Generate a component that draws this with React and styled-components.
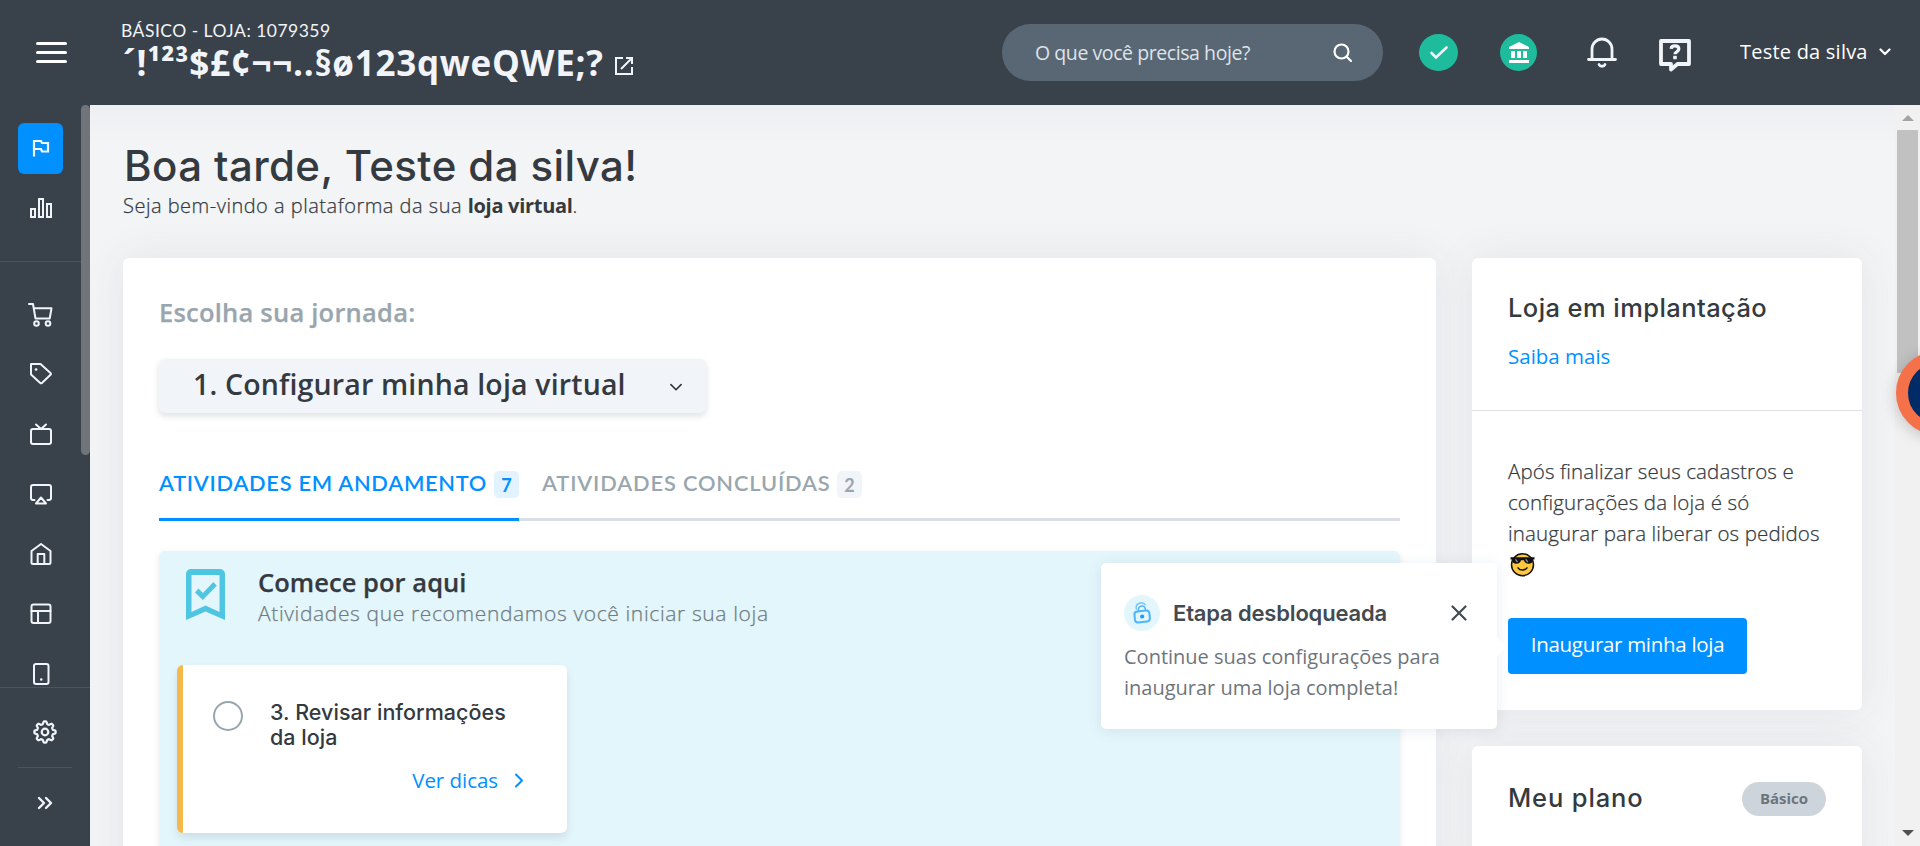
import React from 'react';
import styled, { createGlobalStyle, css } from 'styled-components';

const GlobalStyle = createGlobalStyle`
  * { box-sizing: border-box; }
  body { margin: 0; overflow: hidden; }
  h1, h2, h3, p { margin: 0; }
  button { border: 0; padding: 0; background: none; color: inherit; font: inherit; letter-spacing: inherit; }
`;

const body = '"Open Sans", "Noto Sans", sans-serif';
const heading = 'Inter, "Noto Sans", sans-serif';
const caps = 'Lato, "Open Sans", sans-serif';
const ink = '#343a40';
const blue = '#0090ff';
const dark = '#39414b';

/* ---------- shell ---------- */
const Page = styled.div`
  width: 1920px; height: 846px; overflow: hidden; position: relative;
  display: flex; flex-direction: column;
  font-family: ${body}; color: ${ink}; background: #f3f4f6;
`;
const Body = styled.div` flex: 1; display: flex; min-height: 0; `;

/* ---------- header ---------- */
const Header = styled.header`
  height: 105px; flex: none; display: flex; align-items: center;
  padding-right: 29px; background: ${dark}; color: #f1f4f8;
`;
const MenuButton = styled.button`
  width: 31px; margin: 0 54px 0 36px;
  display: flex; flex-direction: column; gap: 6px;
  span { height: 3px; border-radius: 2px; background: #fff; }
`;
const Brand = styled.div` align-self: flex-start; padding-top: 20px; `;
const StoreMeta = styled.p`
  font: 400 17.5px/22px ${caps}; letter-spacing: .48px; white-space: nowrap;
`;
const StoreName = styled.div`
  display: flex; align-items: center; gap: 10px; margin-top: 2px;
  font-size: 35px; line-height: 38px; font-weight: 700; letter-spacing: .75px; white-space: nowrap;
  padding-left: 2px;
  svg { margin-top: 6px; }
`;
const HeaderTools = styled.div` margin-left: auto; display: flex; align-items: center; `;
const Search = styled.div`
  width: 381px; height: 57px; border-radius: 29px; background: #596775; color: #dfe3e8;
  display: flex; align-items: center; justify-content: space-between;
  padding: 0 30px 0 33px; margin-right: 36px;
  font-size: 19.5px; letter-spacing: -.43px;
  svg { color: #fff; }
`;
const StatusDot = styled.span`
  width: ${p => p.$size}px; height: 37px; border-radius: 50%; background: #1ebc9c;
  display: flex; align-items: center; justify-content: center; margin-right: ${p => p.$gap}px;
`;
const ToolIcon = styled.span` display: flex; margin-right: ${p => p.$gap}px; margin-top: ${p => p.$drop || 0}px; `;
const User = styled.div`
  display: flex; align-items: center; justify-content: space-between; width: 151px;
  font-size: 20px; line-height: 28px; padding-bottom: 1px; letter-spacing: .22px; color: #fff; white-space: nowrap;
`;

/* ---------- sidebar ---------- */
const Sidebar = styled.aside`
  width: 90px; flex: none; background: ${dark}; color: #f1f4f8;
  display: flex; flex-direction: column;
`;
const SideScroll = styled.div` height: 582px; display: flex; overflow: hidden; `;
const SideNav = styled.nav` width: 81px; flex: none; padding-top: 13px; `;
const SideThumb = styled.div` width: 9px; height: 350px; border-radius: 5px; background: #717479; `;
const SideItem = styled.div`
  height: 60px; display: flex; align-items: center; justify-content: center;
`;
const ActiveTile = styled.span`
  width: 45px; height: 51px; border-radius: 6px; background: ${blue};
  display: flex; align-items: center; justify-content: center;
`;
const SideRule = styled.div` height: 1px; background: #475561; margin: 23px 0 22px; `;
const SideFooter = styled.div`
  flex: 1; border-top: 1px solid #475561; display: flex; flex-direction: column; align-items: center;
`;
const FooterItem = styled.div`
  height: ${p => p.$h}px; padding-top: ${p => p.$top || 0}px; display: flex; align-items: center;
`;
const FooterRule = styled.div` width: 54px; height: 1px; background: #475561; `;

/* ---------- content ---------- */
const lightText = css` font-weight: 300; -webkit-text-stroke: .25px currentColor; `;
const Content = styled.main`
  flex: 1; padding: 36px 33px 0; min-width: 0;
  background: linear-gradient(#eeeff2, #f3f4f6 40px);
`;
const Greeting = styled.h1`
  font: 500 42px/49px ${heading}; letter-spacing: .4px; padding-left: 1px;
`;
const Welcome = styled.p`
  ${lightText} padding-top: 1px; font-size: 20px; line-height: 30px; letter-spacing: .5px;
  strong { font-weight: 700; letter-spacing: -.3px; -webkit-text-stroke: 0; }
`;
const Columns = styled.div` display: flex; align-items: flex-start; gap: 36px; margin-top: 37px; `;
const card = css` background: #fff; border-radius: 6px; box-shadow: 0 0 42px rgba(60, 65, 80, .085); `;
const JourneyCard = styled.section` ${card} width: 1313px; height: 700px; padding: 37px 36px 0; `;
const JourneyTitle = styled.h2`
  font-size: 25.5px; line-height: 34px; font-weight: 600; color: #99a6ae; letter-spacing: .22px;
  -webkit-text-stroke: .25px currentColor;
`;
const JourneySelect = styled.button`
  width: 547px; height: 54px; margin-top: 30px; padding: 0 23px 4px 34px;
  display: flex; align-items: center; justify-content: space-between;
  background: #f1f4f8; border-radius: 6px; box-shadow: 0 3px 6px rgba(50, 60, 75, .16);
  font-size: 28.5px; font-weight: 600; letter-spacing: .16px; color: ${ink};
  svg { margin-top: 7px; }
`;
const Tabs = styled.div`
  display: flex; gap: 23px; height: 56px; margin-top: 52px;
  box-shadow: inset 0 -3px #dbdfe5;
`;
const Tab = styled.div`
  display: flex; justify-content: space-between; width: ${p => p.$w}px;
  font: 600 21.8px/36px ${caps}; letter-spacing: ${p => p.$ls}px;
  white-space: nowrap;
  color: ${p => (p.$active ? blue : '#99a6ae')};
  border-bottom: 3px solid ${p => (p.$active ? blue : 'transparent')};
`;
const Count = styled.span`
  width: 25px; height: 27px; margin-top: 6px; border-radius: 5px; text-align: center;
  font-size: 18px; line-height: 28px; font-weight: 700; letter-spacing: 0;
  background: ${p => (p.$active ? '#e2f2ff' : '#f1f4f8')};
`;
const StartPanel = styled.div`
  margin-top: 30px; height: 400px; border-radius: 6px; background: #e3f6fb; padding: 16px 0 0 18px;
  box-shadow: 0 2px 6px rgba(50, 60, 75, .1);
`;
const PanelHead = styled.div` display: flex; padding-left: 9px; height: 61px; svg { margin-top: 2px; } `;
const PanelText = styled.div` margin-left: 33px; `;
const PanelTitle = styled.h3` font-size: 25.5px; line-height: 30px; font-weight: 600; letter-spacing: .05px; -webkit-text-stroke: .25px currentColor; `;
const PanelSub = styled.p` ${lightText} font-size: 21px; line-height: 33px; letter-spacing: .63px; color: #707b84; `;
const TaskCard = styled.article`
  width: 390px; height: 168px; margin-top: 37px; padding: 36px 43px 0 30px;
  border-left: 6px solid #f7b84b; border-radius: 6px; background: #fff;
  box-shadow: 0 5px 9px rgba(50, 80, 95, .13);
  display: flex; gap: 27px;
`;
const TaskCheck = styled.span` width: 30px; height: 30px; flex: none; border: 2px solid #98a6ad; border-radius: 50%; `;
const TaskBody = styled.div` flex: 1; margin-top: -1px; `;
const TaskTitle = styled.h3` font: 500 21.5px/25px ${heading}; letter-spacing: .04px; white-space: nowrap; `;
const TaskLink = styled.div`
  display: flex; justify-content: flex-end; align-items: center; gap: 16px; margin-top: 16px;
  font-size: 20.5px; line-height: 28px; letter-spacing: -.04px; color: ${blue};
`;

/* ---------- right column ---------- */
const Aside = styled.div` width: 390px; display: flex; flex-direction: column; gap: 36px; `;
const InfoCard = styled.section` ${card} `;
const InfoHead = styled.div` height: 153px; padding: 33px 36px 0; border-bottom: 1px solid #dcdfe3; `;
const InfoTitle = styled.h2` font: 500 25.5px/34px ${heading}; letter-spacing: ${p => p.$ls}px; `;
const InfoLink = styled.a` display: block; margin-top: 16px; font-size: 20.5px; line-height: 31px; color: ${blue}; `;
const InfoBody = styled.div` padding: 45px 36px 36px; `;
const InfoText = styled.p` ${lightText} font-size: 20.5px; line-height: 31.2px; letter-spacing: ${p => p.$ls || 0.12}px; white-space: nowrap; `;
const EmojiLine = styled.div` height: 31px; display: flex; align-items: center; padding-left: 2px; margin-top: -1px; `;
const OpenButton = styled.button`
  display: block; width: 239px; height: 56px; margin-top: 38px; border-radius: 4px; background: ${blue}; color: #fff;
  font-size: 20.5px; letter-spacing: -.3px; padding-bottom: 3px; white-space: nowrap;
`;
const PlanHead = styled.div` display: flex; justify-content: space-between; padding: 35px 36px 60px; `;
const PlanPill = styled.span`
  width: 84px; height: 34px; margin-top: 1px; border-radius: 17px; background: #ced4dc; color: #6c757d;
  font-size: 15px; line-height: 32px; font-weight: 700; text-align: center;
`;

/* ---------- window scrollbar ---------- */
const ScrollTrack = styled.div`
  width: 25px; flex: none; background: #f1f1f1; display: flex; flex-direction: column; align-items: center;
  padding: 10px 0 10px;
`;
const ScrollThumb = styled.div` width: 21px; height: 243px; margin: 9px 0 auto; background: #c1c1c1; `;

/* ---------- overlays ---------- */
const Tip = styled.div`
  position: absolute; left: 1101px; top: 563px; width: 396px; height: 166px; padding: 30px 24px 0 23px;
  background: #fff; border-radius: 5px; box-shadow: 0 2px 14px rgba(70, 110, 140, .13);
  color: #434a51;
  &::after {
    content: ''; position: absolute; right: -9px; top: 74px;
    border: solid transparent; border-width: 10px 0 10px 9px; border-left-color: #fff;
  }
`;
const TipHead = styled.div` display: flex; align-items: center; height: 40px; `;
const TipBadge = styled.span`
  width: 36px; height: 36px; border-radius: 50%; background: #e3f6fb; margin-right: 13px;
  display: flex; align-items: center; justify-content: center;
`;
const TipTitle = styled.h3` font: 580 22px/30px ${heading}; letter-spacing: -.17px; flex: 1; padding-bottom: 1px; `;
const TipClose = styled.button` display: flex; margin: 0 6px 0 0; `;
const TipText = styled.p` margin-top: 8px; font-size: 20px; line-height: 31px; letter-spacing: 0; color: #6e757c; white-space: nowrap; `;
const HelpBubble = styled.div`
  position: absolute; left: 1896px; top: 351px; width: 84px; height: 84px; border-radius: 50%;
  background: #002b66; border: 12px solid #f4714a; box-shadow: 0 3px 16px rgba(0, 0, 0, .2);
`;

/* ---------- drawings ---------- */
const Icon = ({ w, h, box, sw = 2, children, ...rest }) => (
  <svg width={w} height={h} viewBox={box || `0 0 ${w} ${h}`} fill="none" stroke="currentColor"
    strokeWidth={sw} strokeLinecap="round" strokeLinejoin="round" {...rest}>{children}</svg>
);

const External = () => (
  <Icon w={20} h={20} sw={2} strokeLinecap="butt" strokeLinejoin="miter">
    <path d="M9 2H2v16h16v-7M12 2h6v6M7 13 17.5 2.5" />
  </Icon>
);
const SearchIcon = () => <Icon w={20} h={20} sw={2.2}><circle cx="8.5" cy="8.5" r="7" /><path d="m13.5 13.5 4.5 4.5" /></Icon>;
const Check = () => <Icon w={20} h={16} sw={2.6} strokeLinejoin="miter"><path d="m2.5 8 4.5 4.5L17.5 2.5" /></Icon>;
const Bank = () => (
  <svg width="22" height="22" viewBox="0 0 22 22" fill="#fff">
    <path d="M11 0 21 5v2H1V5zM3 9h4v7H3zM9 9h4v7H9zM15 9h4v7h-4zM1 18h20v3H1z" />
  </svg>
);
const Bell = () => (
  <Icon w={32} h={32} sw={2.8}>
    <path d="M2.5 22.5h27M6 22V12a10 10 0 0 1 20 0v10" />
    <path d="M13 27.5c1 2.3 5 2.3 6 0" />
  </Icon>
);
const Help = () => (
  <Icon w={34} h={34} sw={3.8}>
    <path d="M3 3h28v23H19.5L13 31.5V26H3z" />
    <path d="M13.2 10.8c.3-4 7.6-3.8 7.6.2 0 3-3.8 2.6-3.8 5.2" strokeWidth="3.3" strokeLinecap="butt" />
    <path d="M17 17.8v3.400" strokeWidth="3.6" strokeLinecap="butt" />
  </Icon>
);
const Chevron = ({ w = 12, h = 8, sw = 1.8 }) => <Icon w={w} h={h} box="0 0 12 8" sw={sw}><path d="m1.5 1.5 4.5 4.5 4.5-4.5" /></Icon>;
const Flag = () => (
  <Icon w={20} h={20} sw={2.2} strokeLinecap="butt" strokeLinejoin="miter">
    <path d="M3 18.5V3h7l1 2h6v8.5h-6l-1-2.500H3" />
  </Icon>
);
const Bars = () => (
  <Icon w={22} h={20} sw={2} strokeLinejoin="miter">
    <path d="M1 11h4v8H1zM9 1h4v18H9zM17 6h4v13h-4z" />
  </Icon>
);
const Cart = () => (
  <Icon w={25} h={25}>
    <path d="M1 2h4l2.5 14.5h14.2L23.5 6.3H6" />
    <circle cx="8.5" cy="21.5" r="2.3" /><circle cx="20" cy="21.5" r="2.3" />
  </Icon>
);
const TagIcon = () => (
  <Icon w={22} h={22}>
    <path d="M1 1h9.5l10 9a1.2 1.2 0 0 1 0 1.8l-8.300 8a1.6 1.6 0 0 1-2.200 0L1 11.500z" />
    <path d="M6 6.5h.1" strokeWidth="2.6" />
  </Icon>
);
const Tv = () => <Icon w={22} h={22}><rect x="1" y="6" width="20" height="15" rx="2" /><path d="m6 1.5 5 4.5 5-4.5" /></Icon>;
const Airplay = () => <Icon w={22} h={22}><path d="M4.5 17H3a2 2 0 0 1-2-2V4a2 2 0 0 1 2-2h16a2 2 0 0 1 2 2v11a2 2 0 0 1-2 2h-1.5" /><path d="m11 14.5 5 6H6z" /></Icon>;
const House = () => <Icon w={22} h={22}><path d="M1.5 8 11 1l9.5 7v11.5a1.5 1.5 0 0 1-1.5 1.5H3a1.5 1.5 0 0 1-1.500-1.500z" /><path d="M7.700 21V11h6.600v10" /></Icon>;
const Layout = () => <Icon w={22} h={22}><rect x="1.5" y="1.5" width="19" height="18.5" rx="2" /><path d="M1.5 8h19M8 8v12" /></Icon>;
const Phone = () => <Icon w={22} h={22}><rect x="4" y="1" width="14.5" height="20" rx="2" /><path d="M11.2 16.5h.1" strokeWidth="2.4" /></Icon>;
const gearPath = (() => {
  const pts = [];
  const n = 96;
  for (let i = 0; i < n; i += 1) {
    const a = (i / n) * Math.PI * 2;
    const wave = Math.tanh(2.2 * Math.cos(8 * a));
    const r = 9.35 + 1.35 * wave;
    pts.push(`${(12 + r * Math.sin(a)).toFixed(2)} ${(12 - r * Math.cos(a)).toFixed(2)}`);
  }
  return `M${pts.join('L')}Z`;
})();
const Gear = () => <Icon w={24} h={24} sw={2.2}><path d={gearPath} /><circle cx="12" cy="12" r="3.3" /></Icon>;
const Doubles = () => <Icon w={16} h={14} sw={2.4}><path d="m2 2 5 5-5 5M9 2l5 5-5 5" /></Icon>;
const Bookmark = () => (
  <svg width="39" height="51" viewBox="0 0 39 51" fill="#4fc6e1">
    <path fillRule="evenodd" d="M5 0h29a5 5 0 0 1 5 5v46l-19.500-8.500L0 51V5a5 5 0 0 1 5-5zM5.500 6v37l14-6.500 14 6.500V6z" />
    <path d="m9 23.5 3.5-4 4.5 4.5L27.3 13l3.5 3.8L16.8 31z" />
  </svg>
);
const CoolFace = () => (
  <svg width="25" height="25" viewBox="0 0 25 25">
    <circle cx="12.5" cy="12.7" r="11" fill="#ffc83d" stroke="#111" strokeWidth="1.5" />
    <path d="M.5 5.2h24v2.3h-1.3c-.4 3-2 4.2-4.5 4.2-2.8 0-4.2-1.4-4.7-3.5h-3c-.5 2.1-1.9 3.5-4.7 3.5-2.5 0-4.1-1.2-4.500-4.200H.5z" fill="#111" />
    <path d="m5.5 7.3 2 2.8M15.8 7.3l2 2.8" stroke="#999" strokeWidth="1.3" />
    <path d="M8 15.8c2 3 7 3 9 0" fill="none" stroke="#111" strokeWidth="1.5" strokeLinecap="round" />
  </svg>
);
const Lock = () => (
  <svg width="20" height="24" viewBox="0 0 20 24" fill="none" stroke="#4db4ff" strokeWidth="2">
    <g transform="rotate(-6 10 14)">
      <rect x="2.5" y="10" width="15" height="11" rx="3" />
      <path d="M5 8V6a5 4.5 0 0 1 9.5-1.5" stroke="#7cc8fb" strokeWidth="1.6" />
      <path d="M7 10V8.5a3.5 3.5 0 0 1 7 0V10" strokeWidth="1.5" />
      <circle cx="10" cy="15.5" r="1.1" fill="#1e9bff" stroke="#1e9bff" />
    </g>
  </svg>
);

const navIcons = [Cart, TagIcon, Tv, Airplay, House, Layout, Phone];

export default function App() {
  return (
    <Page>
      <GlobalStyle />
      <Header>
        <MenuButton aria-label="Menu"><span /><span /><span /></MenuButton>
        <Brand>
          <StoreMeta>BÁSICO - LOJA: 1079359</StoreMeta>
          <StoreName>´!¹²³$£¢¬¬..§ø123qweQWE;?<External /></StoreName>
        </Brand>
        <HeaderTools>
          <Search>O que você precisa hoje?<SearchIcon /></Search>
          <StatusDot $size={39} $gap={42}><Check /></StatusDot>
          <StatusDot $size={37} $gap={49}><Bank /></StatusDot>
          <ToolIcon $gap={40}><Bell /></ToolIcon>
          <ToolIcon $gap={48} $drop={4}><Help /></ToolIcon>
          <User>Teste da silva<Chevron sw={2.2} /></User>
        </HeaderTools>
      </Header>

      <Body>
        <Sidebar>
          <SideScroll>
            <SideNav>
              <SideItem><ActiveTile><Flag /></ActiveTile></SideItem>
              <SideItem><Bars /></SideItem>
              <SideRule />
              {navIcons.map((NavIcon, i) => <SideItem key={i}><NavIcon /></SideItem>)}
            </SideNav>
            <SideThumb />
          </SideScroll>
          <SideFooter>
            <FooterItem $h={79} $top={8}><Gear /></FooterItem>
            <FooterRule />
            <FooterItem $h={70}><Doubles /></FooterItem>
          </SideFooter>
        </Sidebar>

        <Content>
          <Greeting>Boa tarde, Teste da silva!</Greeting>
          <Welcome>Seja bem-vindo a plataforma da sua <strong>loja virtual</strong>.</Welcome>
          <Columns>
            <JourneyCard>
              <JourneyTitle>Escolha sua jornada:</JourneyTitle>
              <JourneySelect>1. Configurar minha loja virtual<Chevron w={14} h={9} sw={1.5} /></JourneySelect>
              <Tabs>
                <Tab $active $w={360} $ls={0.72}>ATIVIDADES EM ANDAMENTO<Count $active>7</Count></Tab>
                <Tab $w={320} $ls={0.86}>ATIVIDADES CONCLUÍDAS<Count>2</Count></Tab>
              </Tabs>
              <StartPanel>
                <PanelHead>
                  <Bookmark />
                  <PanelText>
                    <PanelTitle>Comece por aqui</PanelTitle>
                    <PanelSub>Atividades que recomendamos você iniciar sua loja</PanelSub>
                  </PanelText>
                </PanelHead>
                <TaskCard>
                  <TaskCheck />
                  <TaskBody>
                    <TaskTitle>3. Revisar informações<br />da loja</TaskTitle>
                    <TaskLink>
                      Ver dicas
                      <Icon w={10} h={15} sw={2}><path d="m2 1.5 6 6-6 6" /></Icon>
                    </TaskLink>
                  </TaskBody>
                </TaskCard>
              </StartPanel>
            </JourneyCard>

            <Aside>
              <InfoCard>
                <InfoHead>
                  <InfoTitle $ls={0.42}>Loja em implantação</InfoTitle>
                  <InfoLink>Saiba mais</InfoLink>
                </InfoHead>
                <InfoBody>
                  <InfoText>Após finalizar seus cadastros e<br />configurações da loja é só<br />inaugurar para liberar os pedidos</InfoText>
                  <EmojiLine><CoolFace /></EmojiLine>
                  <OpenButton>Inaugurar minha loja</OpenButton>
                </InfoBody>
              </InfoCard>
              <InfoCard>
                <PlanHead>
                  <InfoTitle $ls={0.85}>Meu plano</InfoTitle>
                  <PlanPill>Básico</PlanPill>
                </PlanHead>
              </InfoCard>
            </Aside>
          </Columns>
        </Content>

        <ScrollTrack>
          <svg width="12" height="6" viewBox="0 0 12 6"><path d="M6 0l6 6H0z" fill="#a3a3a3" /></svg>
          <ScrollThumb />
          <svg width="12" height="6" viewBox="0 0 12 6"><path d="M0 0h12L6 6z" fill="#505050" /></svg>
        </ScrollTrack>
      </Body>

      <Tip>
        <TipHead>
          <TipBadge><Lock /></TipBadge>
          <TipTitle>Etapa desbloqueada</TipTitle>
          <TipClose aria-label="Fechar"><Icon w={16} h={16} sw={2.2}><path d="m1.5 1.5 13 13m0-13-13 13" /></Icon></TipClose>
        </TipHead>
        <TipText>Continue suas configurações para<br />inaugurar uma loja completa!</TipText>
      </Tip>
      <HelpBubble />
    </Page>
  );
}
